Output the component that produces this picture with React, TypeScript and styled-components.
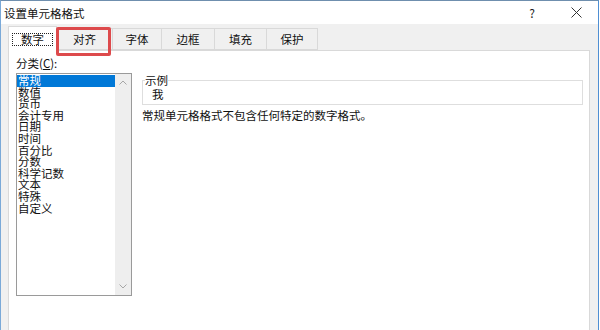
import React from 'react';
import styled, { createGlobalStyle } from 'styled-components';

const GlobalStyle = createGlobalStyle`
	html, body {
		margin: 0;
		padding: 0;
		background: #ffffff;
	}
	body {
		font-family: 'Noto Sans CJK SC', 'Noto Sans', sans-serif;
		color: #111111;
	}
`;

const Window = styled.div`
	width: 599px;
	height: 330px;
	box-sizing: border-box;
	border-top: 1px solid #6f8fae;
	border-left: 1px solid #7aa9d8;
	border-right: 1px solid #4f8fd3;
	background: #f0f0f0;
	display: flex;
	flex-direction: column;
	overflow: hidden;
`;

const TitleBar = styled.div`
	height: 23px;
	flex: none;
	background: #ffffff;
	display: flex;
	align-items: center;
	padding-left: 3px;
`;

const Title = styled.div`
	flex: 1;
	font-size: 11.5px;
	line-height: 14px;
`;

const CaptionButton = styled.div`
	width: 44px;
	height: 23px;
	display: flex;
	align-items: center;
	justify-content: center;
	font-size: 12px;
	color: #222222;
`;

const Body = styled.div`
	flex: 1;
	display: flex;
	flex-direction: column;
	padding: 0 8px 0 7px;
`;

const TabStrip = styled.div`
	height: 27px;
	flex: none;
	display: flex;
	align-items: flex-end;
	margin-bottom: -1px;
	position: relative;
	z-index: 1;
`;

const Tab = styled.div<{ $active?: boolean; $w: number }>`
	position: relative;
	box-sizing: border-box;
	width: ${(p) => p.$w}px;
	height: ${(p) => (p.$active ? 25 : 22)}px;
	margin-bottom: ${(p) => (p.$active ? 0 : 1)}px;
	display: flex;
	align-items: center;
	justify-content: center;
	font-size: 11.5px;
	line-height: 14px;
	background: ${(p) => (p.$active ? '#ffffff' : '#f0f0f0')};
	border: 1px solid #d9d9d9;
	border-bottom: ${(p) => (p.$active ? 'none' : '1px solid #d9d9d9')};
	& + & {
		border-left: none;
	}
`;

const FocusLabel = styled.span`
	padding: 0 8px;
	outline: 1px dotted #222222;
	outline-offset: 0;
	line-height: 11px;
`;

const Highlight = styled.div`
	position: absolute;
	top: -2px;
	left: -1px;
	width: 55px;
	height: 29px;
	box-sizing: border-box;
	border: 3px solid #dd4a4c;
	border-radius: 2px;
	pointer-events: none;
`;

const Panel = styled.div`
	flex: 1;
	margin-bottom: -6px;
	background: #ffffff;
	border: 1px solid #d9d9d9;
	display: flex;
	padding: 5px 6px 0 7px;
`;

const LeftColumn = styled.div`
	width: 116px;
	display: flex;
	flex-direction: column;
`;

const FieldLabel = styled.div`
	font-size: 11.5px;
	line-height: 14px;
	margin-bottom: 3px;
	u {
		text-decoration: underline;
	}
`;

const ListBox = styled.div`
	height: 223px;
	box-sizing: border-box;
	border: 1px solid #9a9a9a;
	display: flex;
`;

const ListItems = styled.div`
	flex: 1;
	padding-top: 1px;
`;

const ListItem = styled.div<{ $selected?: boolean }>`
	font-size: 11.5px;
	line-height: 11.6px;
	height: 11.6px;
	padding-left: 1px;
	white-space: nowrap;
	color: ${(p) => (p.$selected ? '#ffffff' : '#111111')};
	background: ${(p) => (p.$selected ? '#0078d7' : 'transparent')};
`;

const ScrollBar = styled.div`
	width: 16px;
	background: #eeeeee;
	display: flex;
	flex-direction: column;
	justify-content: space-between;
	align-items: center;
`;

const ScrollArrow = styled.div`
	height: 17px;
	display: flex;
	align-items: center;
	justify-content: center;
`;

const RightColumn = styled.div`
	flex: 1;
	margin-left: 10px;
	padding-top: 17px;
	display: flex;
	flex-direction: column;
`;

const SampleGroup = styled.fieldset`
	margin: 0;
	padding: 0 8px 3px 9px;
	border: 1px solid #dedede;
	min-width: 0;
`;

const SampleLegend = styled.legend`
	margin-left: -7px;
	padding: 0;
	font-size: 11.5px;
	line-height: 14px;
`;

const SampleText = styled.div`
	font-size: 11.5px;
	line-height: 14px;
`;

const Description = styled.div`
	margin-top: 3px;
	font-size: 11.5px;
	line-height: 14px;
`;

const tabs = [
	{ label: '数字', w: 49 },
	{ label: '对齐', w: 56 },
	{ label: '字体', w: 49 },
	{ label: '边框', w: 53 },
	{ label: '填充', w: 52 },
	{ label: '保护', w: 51 },
];

const categories = [
	'常规',
	'数值',
	'货币',
	'会计专用',
	'日期',
	'时间',
	'百分比',
	'分数',
	'科学记数',
	'文本',
	'特殊',
	'自定义',
];

const Chevron = ({ up }: { up?: boolean }) => (
	<svg width='8' height='5' viewBox='0 0 8 5'>
		<path
			d={up ? 'M0.5 4.5 L4 1 L7.5 4.5' : 'M0.5 0.5 L4 4 L7.5 0.5'}
			fill='none'
			stroke='#a6a6a6'
			strokeWidth='1'
		/>
	</svg>
);

export default function App() {
	return (
		<>
			<GlobalStyle />
			<Window>
				<TitleBar>
					<Title>设置单元格格式</Title>
					<CaptionButton>?</CaptionButton>
					<CaptionButton>
						<svg width='11' height='11' viewBox='0 0 11 11'>
							<path
								d='M0.5 0.5 L10.5 10.5 M10.5 0.5 L0.5 10.5'
								stroke='#333333'
								strokeWidth='1'
							/>
						</svg>
					</CaptionButton>
				</TitleBar>
				<Body>
					<TabStrip>
						{tabs.map((t, i) => (
							<Tab key={t.label} $active={i === 0} $w={t.w}>
								{i === 0 ? <FocusLabel>{t.label}</FocusLabel> : t.label}
								{i === 1 && <Highlight />}
							</Tab>
						))}
					</TabStrip>
					<Panel>
						<LeftColumn>
							<FieldLabel>
								分类(<u>C</u>):
							</FieldLabel>
							<ListBox>
								<ListItems>
									{categories.map((c, i) => (
										<ListItem key={c} $selected={i === 0}>
											{c}
										</ListItem>
									))}
								</ListItems>
								<ScrollBar>
									<ScrollArrow>
										<Chevron up />
									</ScrollArrow>
									<ScrollArrow>
										<Chevron />
									</ScrollArrow>
								</ScrollBar>
							</ListBox>
						</LeftColumn>
						<RightColumn>
							<SampleGroup>
								<SampleLegend>示例</SampleLegend>
								<SampleText>我</SampleText>
							</SampleGroup>
							<Description>常规单元格格式不包含任何特定的数字格式。</Description>
						</RightColumn>
					</Panel>
				</Body>
			</Window>
		</>
	);
}
